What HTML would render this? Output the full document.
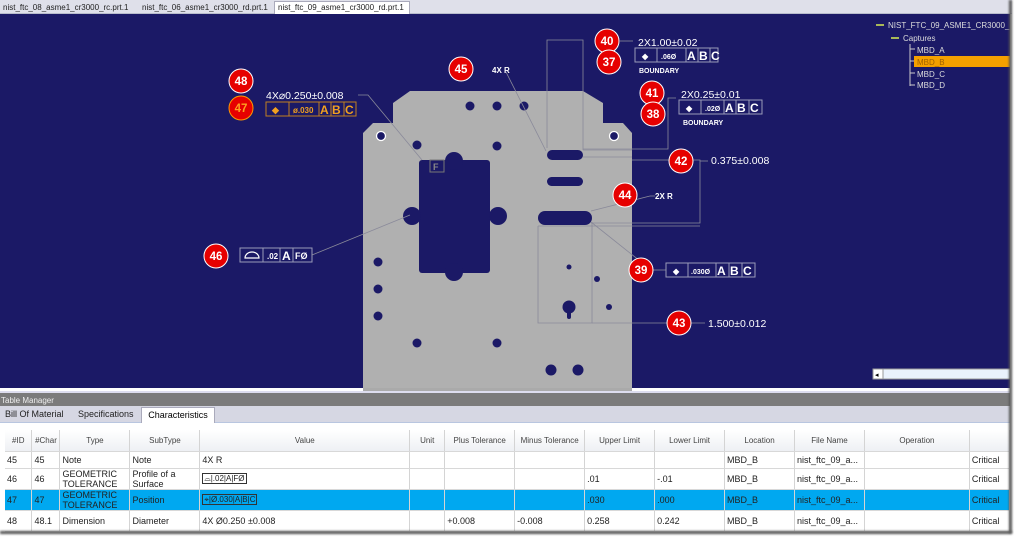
<!DOCTYPE html>
<html><head><style>
*{margin:0;padding:0;box-sizing:border-box}
body{width:1024px;height:545px;background:#fff;font-family:"Liberation Sans","DejaVu Sans",sans-serif;position:relative;overflow:hidden}
.tabs{position:absolute;left:0;top:0;width:1012px;height:14px;background:#dfe0ea;border-bottom:1px solid #b8bccc}
.tab{position:absolute;top:2px;height:12px;font-size:8px;color:#222;line-height:11px;padding-left:3px}
.tab.a{background:#fff;border:1px solid #aab;border-bottom:none;top:1px;height:14px}
#vp{position:absolute;left:0;top:14px;width:1010px;height:374px;background:#1b1966}
.tm{position:absolute;left:0;top:391px;width:1010px;height:15px;background:#7b7b7b;color:#eee;font-size:8px;line-height:15px;padding-left:1px;border-top:2px solid #dde}
.ttabs{position:absolute;left:0;top:406px;width:1010px;height:17px;background:#d6d7e3;border-bottom:1px solid #b9c6e0}
.tt{position:absolute;top:3px;font-size:9px;color:#222}
.tta{position:absolute;left:141px;top:1px;width:74px;height:17px;background:#fff;border:1px solid #aab;border-bottom:none;font-size:9px;text-align:center;line-height:14px}
.grid{position:absolute;left:0;top:423px;width:1010px;height:110px;background:#fff}
table{position:absolute;left:5px;top:7px;border-collapse:collapse;font-size:9px;color:#222;table-layout:fixed}
td,th{border-right:1px solid #d4d4d4;border-bottom:1px solid #d8d8d8;padding:0 2px;overflow:hidden;white-space:nowrap;vertical-align:middle}
th{font-weight:normal;color:#444;font-size:8px;height:21px;background:linear-gradient(#fff,#eef0f4)}
tr.sel td{background:#00a8f0}
.w{white-space:normal;line-height:10px}
</style></head><body>
<div class="tabs">
<div class="tab" style="left:0">nist_ftc_08_asme1_cr3000_rc.prt.1</div>
<div class="tab" style="left:139px">nist_ftc_06_asme1_cr3000_rd.prt.1</div>
<div class="tab a" style="left:274px;width:136px">nist_ftc_09_asme1_cr3000_rd.prt.1</div>
</div>
<div id="vp">
<svg width="1010" height="374" viewBox="0 14 1010 374" style="display:block" font-family="Liberation Sans,sans-serif">
<g fill="#b0b0b0">
<polygon points="410,91 583,91 603,103 603,123 623,123 632,133 632,388 363,388 363,133 373,123 393,123 393,103"/>
</g>
<g fill="#1b1966">
<rect x="419" y="160" width="71" height="113" rx="3"/>
<circle cx="454" cy="161" r="9"/><circle cx="454" cy="272" r="9"/>
<circle cx="412" cy="216" r="9"/><circle cx="498" cy="216" r="9"/>
<rect x="547" y="150" width="36" height="10" rx="5"/>
<rect x="547" y="177" width="36" height="9" rx="4.5"/>
<rect x="538" y="211" width="54" height="14" rx="7"/>
<circle cx="470" cy="106" r="4.5"/><circle cx="497" cy="106" r="4.5"/><circle cx="524" cy="106" r="4.5"/>
<circle cx="417" cy="145" r="4.5"/><circle cx="497" cy="146" r="4.5"/>
<circle cx="378" cy="262" r="4.5"/><circle cx="378" cy="289" r="4.5"/><circle cx="378" cy="316" r="4.5"/>
<circle cx="417" cy="343" r="4.5"/><circle cx="497" cy="343" r="4.5"/>
<circle cx="551" cy="370" r="5.5"/><circle cx="578" cy="370" r="5.5"/>
<circle cx="569" cy="267" r="2.5"/><circle cx="597" cy="279" r="3"/><circle cx="609" cy="307" r="3"/>
<circle cx="569" cy="307" r="6.5"/><rect x="567" y="307" width="4" height="12" rx="2"/>
</g>
<circle cx="381" cy="136" r="4.5" fill="#1b1966" stroke="#fff" stroke-width="1.3"/>
<circle cx="614" cy="136" r="4.5" fill="#1b1966" stroke="#fff" stroke-width="1.3"/>
<rect x="430" y="160" width="14" height="12" fill="none" stroke="#777"/><text x="433" y="170" font-size="9" fill="#888" font-weight="bold">F</text>
<g stroke="#8a8a9a" stroke-width="0.8" fill="none">
<polyline points="358,95 368,95 422,160"/>
<line x1="506" y1="72" x2="546" y2="151"/>
<polyline points="547,148 547,40 583,40 583,150"/>
<line x1="583" y1="150" x2="632" y2="150"/>
<line x1="583" y1="157" x2="632" y2="157"/>
<line x1="620" y1="41" x2="633" y2="41"/>
<polyline points="676,98 668,98 668,149 583,149"/>
<polyline points="632,160 696,160 700,160 700,223 591,223"/>
<line x1="700" y1="161" x2="708" y2="161"/>
<line x1="538" y1="226" x2="700" y2="226" />
<line x1="591" y1="211" x2="650" y2="196"/>
<line x1="650" y1="196" x2="655" y2="196"/>
<line x1="591" y1="222" x2="645" y2="265"/>
<polyline points="538,226 538,323 592,323 592,222"/>
<line x1="592" y1="323" x2="705" y2="323"/>
<line x1="312" y1="255" x2="410" y2="215"/>
<line x1="653" y1="270" x2="666" y2="270"/>
</g>
<g font-weight="bold" fill="#fff" text-anchor="middle" font-size="11.5">
<g stroke="#fff" stroke-width="1"><circle cx="241" cy="81" r="12" fill="#e60000"/><circle cx="241" cy="108" r="12" fill="#e60000" stroke="#ff9900"/><circle cx="461" cy="69" r="12" fill="#e60000"/><circle cx="607" cy="41" r="12" fill="#e60000"/><circle cx="609" cy="62" r="12" fill="#e60000"/><circle cx="652" cy="93" r="12" fill="#e60000"/><circle cx="653" cy="114" r="12" fill="#e60000"/><circle cx="681" cy="161" r="12" fill="#e60000"/><circle cx="625" cy="195" r="12" fill="#e60000"/><circle cx="216" cy="256" r="12" fill="#e60000"/><circle cx="641" cy="270" r="12" fill="#e60000"/><circle cx="679" cy="323" r="12" fill="#e60000"/></g>
<text x="241" y="85">48</text><text x="241" y="112" fill="#ffa020">47</text><text x="461" y="73">45</text><text x="607" y="45">40</text><text x="609" y="66">37</text><text x="652" y="97">41</text><text x="653" y="118">38</text><text x="681" y="165">42</text><text x="625" y="199">44</text><text x="216" y="260">46</text><text x="641" y="274">39</text><text x="679" y="327">43</text>
</g>
<g fill="#fff" font-size="10.5">
<text x="266" y="99">4X⌀0.250±0.008</text>
<text x="638" y="46">2X1.00±0.02</text>
<text x="681" y="98">2X0.25±0.01</text>
<text x="711" y="164">0.375±0.008</text>
<text x="708" y="327">1.500±0.012</text>
<text x="492" y="73" font-size="8" font-weight="bold">4X R</text>
<text x="655" y="199" font-size="8" font-weight="bold">2X R</text>
<text x="639" y="73" font-size="7" font-weight="bold">BOUNDARY</text>
<text x="683" y="125" font-size="7" font-weight="bold">BOUNDARY</text>
</g>
<g fill="none" stroke="#c08020"><rect x="266" y="102" width="90" height="14"/><line x1="289" y1="102" x2="289" y2="116"/><line x1="319" y1="102" x2="319" y2="116"/><line x1="331" y1="102" x2="331" y2="116"/><line x1="344" y1="102" x2="344" y2="116"/></g>
<g fill="#f0a020" font-weight="bold"><text x="272" y="113" font-size="9">◆</text><text x="293" y="113" font-size="8">ø.030</text><text x="320" y="114" font-size="12">A</text><text x="332" y="114" font-size="12">B</text><text x="345" y="114" font-size="12">C</text></g>
<g fill="none" stroke="#9a9ab8">
<rect x="635" y="48" width="83" height="14"/><line x1="657" y1="48" x2="657" y2="62"/><line x1="686" y1="48" x2="686" y2="62"/><line x1="698" y1="48" x2="698" y2="62"/><line x1="710" y1="48" x2="710" y2="62"/>
<rect x="679" y="100" width="83" height="14"/><line x1="701" y1="100" x2="701" y2="114"/><line x1="724" y1="100" x2="724" y2="114"/><line x1="736" y1="100" x2="736" y2="114"/><line x1="749" y1="100" x2="749" y2="114"/>
<rect x="666" y="263" width="89" height="14"/><line x1="688" y1="263" x2="688" y2="277"/><line x1="716" y1="263" x2="716" y2="277"/><line x1="729" y1="263" x2="729" y2="277"/><line x1="742" y1="263" x2="742" y2="277"/>
<rect x="240" y="248" width="72" height="14"/><line x1="263" y1="248" x2="263" y2="262"/><line x1="280" y1="248" x2="280" y2="262"/><line x1="293" y1="248" x2="293" y2="262"/>
</g>
<g fill="#fff" font-weight="bold">
<text x="642" y="59" font-size="8">◆</text><text x="661" y="59" font-size="7">.06Ø</text><text x="687" y="60" font-size="12">A</text><text x="699" y="60" font-size="12">B</text><text x="711" y="60" font-size="12">C</text>
<text x="686" y="111" font-size="8">◆</text><text x="705" y="111" font-size="7">.02Ø</text><text x="725" y="112" font-size="12">A</text><text x="737" y="112" font-size="12">B</text><text x="750" y="112" font-size="12">C</text>
<text x="673" y="274" font-size="8">◆</text><text x="691" y="274" font-size="7">.030Ø</text><text x="717" y="275" font-size="12">A</text><text x="730" y="275" font-size="12">B</text><text x="743" y="275" font-size="12">C</text>
<text x="267" y="259" font-size="8">.02</text><text x="282" y="260" font-size="12">A</text><text x="295" y="259" font-size="9">FØ</text>
</g>
<path d="M245 258 a7 6 0 0 1 14 0 z" fill="none" stroke="#fff" stroke-width="1.2"/>
<g fill="#ddd" font-size="8">
<rect x="876" y="24" width="8" height="2" fill="#a8b858"/><text x="888" y="28">NIST_FTC_09_ASME1_CR3000_RE</text>
<rect x="891" y="37" width="8" height="2" fill="#a8b858"/><text x="903" y="41">Captures</text>
<path d="M910 44 V86 M910 49 H915 M910 61 H915 M910 73 H915 M910 85 H915" stroke="#ccc" fill="none"/>
<rect x="914" y="56" width="96" height="11" fill="#f4a000"/>
<text x="917" y="53">MBD_A</text><text x="917" y="65" fill="#a06000">MBD_B</text><text x="917" y="77">MBD_C</text><text x="917" y="88">MBD_D</text>
</g>
<rect x="873" y="369" width="137" height="10" fill="#eaf2fc" stroke="#999"/><rect x="873" y="369" width="10" height="10" fill="#fff" stroke="#999"/><text x="875" y="377" font-size="7" fill="#000">◂</text>
</svg>
</div>
<div style="position:absolute;left:363px;top:388px;width:269px;height:3px;background:#aaa"></div>
<div class="tm">Table Manager</div>
<div class="ttabs"><div class="tt" style="left:5px">Bill Of Material</div><div class="tt" style="left:78px">Specifications</div><div class="tta">Characteristics</div></div>
<div class="grid">
<table>
<colgroup><col style="width:27px"><col style="width:28px"><col style="width:70px"><col style="width:70px"><col style="width:210px"><col style="width:35px"><col style="width:70px"><col style="width:70px"><col style="width:70px"><col style="width:70px"><col style="width:70px"><col style="width:70px"><col style="width:105px"><col style="width:40px"></colgroup>
<tr><th>#ID</th><th>#Char</th><th>Type</th><th>SubType</th><th>Value</th><th>Unit</th><th>Plus Tolerance</th><th>Minus Tolerance</th><th>Upper Limit</th><th>Lower Limit</th><th>Location</th><th>File Name</th><th>Operation</th><th></th></tr>
<tr style="height:17px"><td>45</td><td>45</td><td>Note</td><td>Note</td><td>4X R</td><td></td><td></td><td></td><td></td><td></td><td>MBD_B</td><td>nist_ftc_09_a...</td><td></td><td>Critical</td></tr>
<tr style="height:21px"><td>46</td><td>46</td><td class="w">GEOMETRIC TOLERANCE</td><td class="w">Profile of a Surface</td><td><span style="border:1px solid #333;font-size:8px;padding:0 1px">⌓|.02|A|FØ</span></td><td></td><td></td><td></td><td>.01</td><td>-.01</td><td>MBD_B</td><td>nist_ftc_09_a...</td><td></td><td>Critical</td></tr>
<tr class="sel" style="height:21px"><td>47</td><td>47</td><td class="w">GEOMETRIC TOLERANCE</td><td>Position</td><td><span style="border:1px solid #333;font-size:8px;padding:0 1px">⌖|Ø.030|A|B|C</span></td><td></td><td></td><td></td><td>.030</td><td>.000</td><td>MBD_B</td><td>nist_ftc_09_a...</td><td></td><td>Critical</td></tr>
<tr style="height:21px"><td>48</td><td>48.1</td><td>Dimension</td><td>Diameter</td><td>4X Ø0.250 ±0.008</td><td></td><td>+0.008</td><td>-0.008</td><td>0.258</td><td>0.242</td><td>MBD_B</td><td>nist_ftc_09_a...</td><td></td><td>Critical</td></tr>
</table>
</div>
<div style="position:absolute;left:0;top:531px;width:1012px;height:3px;background:#555;filter:blur(1px)"></div>
<div style="position:absolute;left:1009px;top:0;width:3px;height:533px;background:#555;filter:blur(1px)"></div>
</body></html>
